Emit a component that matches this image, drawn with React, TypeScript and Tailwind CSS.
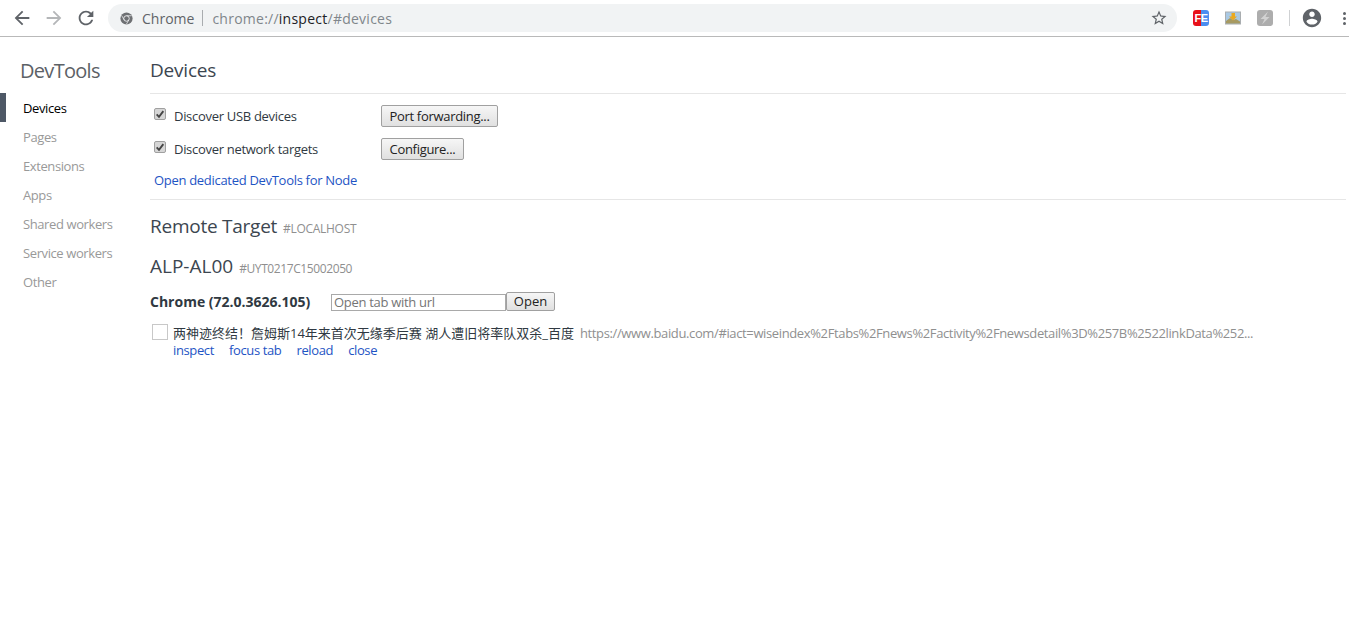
const NAV = ['Pages', 'Extensions', 'Apps', 'Shared workers', 'Service workers', 'Other'];

function Icon({ d, className }: { d: string; className: string }) {
  return (
    <svg viewBox="0 0 24 24" className={className} fill="currentColor">
      <path d={d} />
    </svg>
  );
}

function ChromeLogo() {
  return (
    <svg viewBox="0 0 16 16" className="w-[13px] h-[13px] shrink-0">
      <circle cx="8" cy="8" r="7.5" fill="#6e7073" />
      <circle cx="8" cy="8" r="3.4" fill="#6e7073" stroke="#f1f3f4" strokeWidth="1.1" />
      <path d="M8 4.6h6.2M5.1 9.7 2 4.3M10.9 9.7l-3.1 5.4" stroke="#f1f3f4" strokeWidth="0.9" />
    </svg>
  );
}

function Toolbar() {
  return (
    <div className="h-[37px] shrink-0 flex items-center border-b border-[#b9b9b9] bg-white">
      <div className="w-[108px] shrink-0 flex items-center pl-[11px] gap-[10px]">
        <Icon className="w-[22px] h-[22px] text-[#5f6368]" d="M20 11H7.83l5.59-5.59L12 4l-8 8 8 8 1.41-1.41L7.83 13H20v-2z" />
        <Icon className="w-[22px] h-[22px] text-[#b4b6b8]" d="M12 4l-1.41 1.41L16.17 11H4v2h12.17l-5.58 5.59L12 20l8-8z" />
        <Icon className="w-[22px] h-[22px] text-[#5f6368]" d="M17.65 6.35C16.2 4.9 14.21 4 12 4c-4.42 0-7.99 3.58-7.99 8s3.57 8 7.99 8c3.73 0 6.84-2.55 7.73-6h-2.08c-.82 2.33-3.04 4-5.65 4-3.31 0-6-2.69-6-6s2.69-6 6-6c1.66 0 3.14.69 4.22 1.78L13 11h7V4l-2.35 2.35z" />
      </div>
      <div className="w-[1069px] h-[28px] shrink-0 rounded-full bg-[#f1f3f4] flex items-center pl-[12px] pr-[9px] text-[14px]">
        <ChromeLogo />
        <span className="ml-[9px] text-[#5f6368]">Chrome</span>
        <span className="ml-[8px] mr-[9px] w-px h-[16px] bg-[#a9acaf]" />
        <span className="tracking-[0.25px] text-[#80868b]">chrome://</span>
        <span className="tracking-[0.25px] text-[#202124]">inspect</span>
        <span className="tracking-[0.25px] text-[#80868b]">/#devices</span>
        <Icon className="w-[18px] h-[18px] ml-auto text-[#5f6368]" d="M22 9.24l-7.19-.62L12 2 9.19 8.63 2 9.24l5.46 4.73L5.82 21 12 17.27 18.18 21l-1.63-7.03L22 9.24zM12 15.4l-3.76 2.27 1-4.28-3.32-2.88 4.38-.38L12 6.1l1.71 4.04 4.38.38-3.32 2.88 1 4.28L12 15.4z" />
      </div>
      <div className="flex-1 flex items-center pl-[16px]">
        <div className="w-[16px] h-[16px] rounded-[3px] overflow-hidden flex relative">
          <div className="w-[8px] bg-[#e8111a]" />
          <div className="w-[8px] bg-[#4a8df0]" />
          <span className="absolute inset-0 flex items-center justify-center text-white font-bold text-[11px] leading-none tracking-[-0.5px] font-['Liberation_Sans',sans-serif]">FE</span>
        </div>
        <svg viewBox="0 0 16 16" className="w-[16px] h-[16px] ml-[16px]">
          <rect x="0" y="1.5" width="16" height="13" fill="#a9adb0" />
          <rect x="1" y="2.5" width="14" height="11" fill="#a9c9e4" />
          <path d="M1 13.5 1 11l4-3 3 2 3-1 4 2.5v2z" fill="#a79a62" />
          <path d="M6.5 3h3.5v3.5h2l-4 4-4-4h2.500z" fill="#eaa920" />
        </svg>
        <div className="w-[16px] h-[16px] ml-[16px] rounded-[3px] bg-[#adadad] flex items-center justify-center">
          <svg viewBox="0 0 16 16" className="w-[16px] h-[16px]">
            <path d="M11 1.500 3.500 9H7.500L5 14.500 12.500 7H8.500z" fill="#d2d2d2" />
          </svg>
        </div>
        <div className="w-px h-[16px] bg-[#cfd1d3] ml-[16px]" />
        <Icon className="w-[22px] h-[22px] ml-[11px] text-[#5f6368]" d="M12 2C6.48 2 2 6.48 2 12s4.48 10 10 10 10-4.48 10-10S17.52 2 12 2zm0 3c1.66 0 3 1.34 3 3s-1.34 3-3 3-3-1.34-3-3 1.34-3 3-3zm0 14.2c-2.5 0-4.71-1.28-6-3.22.03-1.99 4-3.08 6-3.08 1.99 0 5.97 1.09 6 3.08-1.29 1.94-3.5 3.22-6 3.22z" />
        <div className="ml-[20px] flex flex-col gap-[2px]">
          <span className="w-[3px] h-[3px] rounded-full bg-[#5f6368]" />
          <span className="w-[3px] h-[3px] rounded-full bg-[#5f6368]" />
          <span className="w-[3px] h-[3px] rounded-full bg-[#5f6368]" />
        </div>
      </div>
    </div>
  );
}

function Sidebar() {
  return (
    <div className="w-[150px] shrink-0 pt-[21px]">
      <div className="pl-[20px] text-[20px] leading-[26px] tracking-[-0.7px] text-[#5c6166]">DevTools</div>
      <div className="mt-[9px] text-[13px] tracking-[-0.4px]">
        <div className="h-[29px] pt-[2px] flex items-center border-l-[6px] border-[#4e5866] pl-[17px] text-[#000]">Devices</div>
        {NAV.map((n) => (
          <div key={n} className="h-[29px] pt-[2px] flex items-center pl-[23px] text-[#999]">{n}</div>
        ))}
      </div>
    </div>
  );
}

function OptionRow({ label, action, width }: { label: string; action: string; width: string }) {
  return (
    <div className="h-[23px] flex items-center">
      <div className="w-[231px] flex items-center pl-[4px]">
        <span className="w-[12px] h-[12px] -mt-[5px] shrink-0 rounded-[2px] border border-[#a0a0a0] bg-[#d6d6d6] flex items-center justify-center">
          <svg viewBox="0 0 12 12" className="w-[10px] h-[10px]">
            <path d="M2 6.500 4.800 9.500 10 2.500" fill="none" stroke="#444" strokeWidth="2.200" />
          </svg>
        </span>
        <span className="ml-[8px] text-[13px] tracking-[-0.3px] text-[#303942]">{label}</span>
      </div>
      <button className={`h-[22px] self-start rounded-[2px] border border-[#a0a0a0] bg-gradient-to-b from-[#f6f6f6] to-[#e0e0e0] text-[13px] tracking-[-0.3px] leading-none text-[#222] ${width}`}>
        {action}
      </button>
    </div>
  );
}

export default function App() {
  return (
    <div className="w-[1349px] h-[644px] bg-white flex flex-col overflow-hidden font-['Open_Sans','Noto_Sans_CJK_SC',sans-serif]">
      <Toolbar />
      <div className="flex flex-1">
        <Sidebar />
        <div className="flex-1 pr-[3px]">
          <div className="h-[57px] border-b border-[#e6e6e6] flex items-end pb-[10px]">
            <h1 className="text-[19px] leading-[26px] tracking-[-0.2px] text-[#3c4650]">Devices</h1>
          </div>
          <div className="pt-[11px] flex flex-col gap-[10px]">
            <OptionRow label="Discover USB devices" action="Port forwarding..." width="w-[117px]" />
            <OptionRow label="Discover network targets" action="Configure..." width="w-[83px]" />
          </div>
          <div className="pl-[4px] mt-[10px] h-[18px] leading-[18px] text-[13px] tracking-[-0.3px] text-[#1e54c4]">Open dedicated DevTools for Node</div>
          <div className="mt-[10px] border-t border-[#e6e6e6]" />
          <div className="mt-[13px] flex items-baseline">
            <h2 className="text-[19px] leading-[26px] tracking-[-0.25px] text-[#3c4650]">Remote Target</h2>
            <span className="ml-[6px] text-[12px] tracking-[-0.3px] text-[#8f8f8f]">#LOCALHOST</span>
          </div>
          <div className="mt-[14px] flex items-baseline">
            <h2 className="text-[19px] leading-[26px] text-[#3c4650]">ALP-AL00</h2>
            <span className="ml-[6px] text-[12px] tracking-[-0.4px] text-[#8f8f8f]">#UYT0217C15002050</span>
          </div>
          <div className="mt-[13px] h-[19px] flex items-end">
            <div className="w-[181px] self-center text-[14px] font-bold text-[#303942]">Chrome (72.0.3626.105)</div>
            <input
              placeholder="Open tab with url"
              className="w-[175px] h-[17px] border border-[#a9a9a9] px-[2px] text-[13px] tracking-[-0.3px] outline-none placeholder:text-[#757575]"
            />
            <button className="w-[49px] h-[19px] rounded-[2px] border border-[#a0a0a0] bg-gradient-to-b from-[#f6f6f6] to-[#e0e0e0] text-[13px] leading-none text-[#222]">Open</button>
          </div>
          <div className="mt-[13px] flex">
            <div className="ml-[2px] w-[16px] h-[16px] shrink-0 border border-[#c8c8c8]" />
            <div className="ml-[5px]">
              <div className="h-[18px] leading-[18px] flex text-[13px] whitespace-nowrap">
                <span className="text-[#303942]">两神迹终结！詹姆斯14年来首次无缘季后赛 湖人遭旧将率队双杀_百度</span>
                <span className="ml-[6px] tracking-[-0.37px] text-[#8f8f8f]">https://www.baidu.com/#iact=wiseindex%2Ftabs%2Fnews%2Factivity%2Fnewsdetail%3D%257B%2522linkData%252...</span>
              </div>
              <div className="h-[17px] leading-[17px] flex gap-[15px] text-[13px] tracking-[-0.37px] text-[#1e54c4]">
                <span>inspect</span>
                <span>focus tab</span>
                <span>reload</span>
                <span>close</span>
              </div>
            </div>
          </div>
        </div>
      </div>
    </div>
  );
}
